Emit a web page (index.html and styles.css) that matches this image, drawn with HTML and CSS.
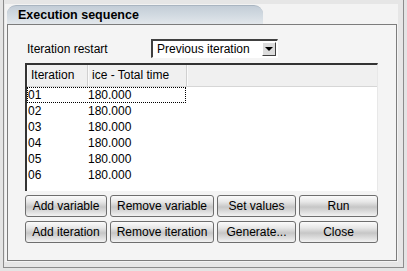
FILE: index.html
```html
<!DOCTYPE html>
<html>

<head>
    <meta charset="utf-8" />
    <title>Execution sequence</title>
    <link rel="stylesheet" href="styles.css">
</head>

<body>
    <div class="window">
        <div class="page">
            <div class="tab">Execution sequence</div>
            <div class="panel">
                <div class="restart">
                    <span class="label">Iteration restart</span>
                    <div class="combo">
                        <span class="combo-text">Previous iteration</span>
                        <span class="arrow"></span>
                    </div>
                </div>
                <div class="table">
                    <div class="thead">
                        <div class="th c1">Iteration</div>
                        <div class="th c2">ice - Total time</div>
                        <div class="th fill"></div>
                    </div>
                    <div class="row"><div class="sel"><span class="c1">01</span><span class="c2">180.000</span></div></div>
                    <div class="row"><div class="cells"><span class="c1">02</span><span class="c2">180.000</span></div></div>
                    <div class="row"><div class="cells"><span class="c1">03</span><span class="c2">180.000</span></div></div>
                    <div class="row"><div class="cells"><span class="c1">04</span><span class="c2">180.000</span></div></div>
                    <div class="row"><div class="cells"><span class="c1">05</span><span class="c2">180.000</span></div></div>
                    <div class="row"><div class="cells"><span class="c1">06</span><span class="c2">180.000</span></div></div>
                </div>
                <div class="buttons">
                    <button>Add variable</button>
                    <button>Remove variable</button>
                    <button>Set values</button>
                    <button>Run</button>
                    <button>Add iteration</button>
                    <button>Remove iteration</button>
                    <button>Generate...</button>
                    <button>Close</button>
                </div>
            </div>
        </div>
    </div>
</body>

</html>
```

FILE: styles.css
```css
* {
    margin: 0;
    padding: 0;
    box-sizing: border-box;
}

body {
    background: #e4e4e4;
    font-family: "Liberation Sans", Arial, sans-serif;
    font-size: 12px;
    color: #000;
}

.window {
    margin-left: 3px;
    width: 401px;
    height: 268px;
    border: 1px solid #8c8c8c;
    border-top: none;
    background: #e6e6e6;
    padding: 4px 0 0 1px;
}

.page {
    width: 393px;
    height: 258px;
    background: #f3f3f3;
    padding: 1px 1px 0 2px;
}

.tab {
    width: 256px;
    height: 19px;
    border-radius: 9px 9px 0 0;
    border-top: 1px solid #a9b5c1;
    background: linear-gradient(#c3cdd7, #d3dbe2 55%, #e2e7eb);
    font-weight: bold;
    font-size: 12.5px;
    line-height: 18px;
    padding-left: 11px;
}

.panel {
    width: 390px;
    height: 237px;
    border: 1px solid #7c7c7c;
    background: #f4f4f4;
    padding: 14px 0 0 17px;
}

.restart {
    display: flex;
    align-items: center;
    height: 19px;
}

.label {
    width: 126px;
    padding-left: 2px;
}

.combo {
    width: 127px;
    height: 19px;
    background: #fff;
    border-top: 2px solid #404040;
    border-left: 2px solid #404040;
    border-right: 1px solid #fff;
    border-bottom: 1px solid #fff;
    display: flex;
    align-items: center;
    justify-content: space-between;
    padding: 0 1px 0 4px;
}

.arrow {
    width: 14px;
    height: 14px;
    background: #dcdcdc;
    border-top: 1px solid #fff;
    border-left: 1px solid #fff;
    border-right: 1px solid #404040;
    border-bottom: 1px solid #404040;
    position: relative;
}

.arrow::after {
    content: "";
    position: absolute;
    left: 2px;
    top: 4px;
    border-left: 4px solid transparent;
    border-right: 4px solid transparent;
    border-top: 4px solid #000;
}

.table {
    margin-top: 5px;
    width: 353px;
    height: 128px;
    background: #fff;
    border-top: 2px solid #333;
    border-left: 2px solid #333;
    border-right: 1px solid #e8e8e8;
}

.thead {
    display: flex;
    height: 22px;
    background: #f0f0f0;
    border-bottom: 1px solid #d6d6d6;
}

.th {
    line-height: 21px;
    border-right: 1px solid #d0d0d0;
    box-shadow: inset 1px 0 #fafafa;
}

.th.c1 {
    width: 61px;
    padding-left: 4px;
}

.th.c2 {
    width: 99px;
    padding-left: 4px;
}

.th.fill {
    flex: 1;
    border-right: none;
}

.row {
    height: 16px;
    display: flex;
}

.sel,
.cells {
    display: flex;
    width: 159px;
    height: 16px;
    line-height: 15px;
    border: 1px dotted transparent;
}

.sel {
    border-color: #000;
}

.row .c1 {
    width: 60px;
}

.buttons {
    margin-top: 4px;
    display: grid;
    grid-template-columns: 82px 104px 79px 79px;
    grid-auto-rows: 22px;
    column-gap: 3px;
    row-gap: 4px;
}

button {
    font-family: "Liberation Sans", Arial, sans-serif;
    font-size: 12px;
    color: #000;
    border: 1px solid #6e6e6e;
    border-radius: 3px;
    background: linear-gradient(#fbfbfb, #e6e6e6 30%, #c6c6c6 55%, #dedede 80%, #f2f2f2);
}
```
